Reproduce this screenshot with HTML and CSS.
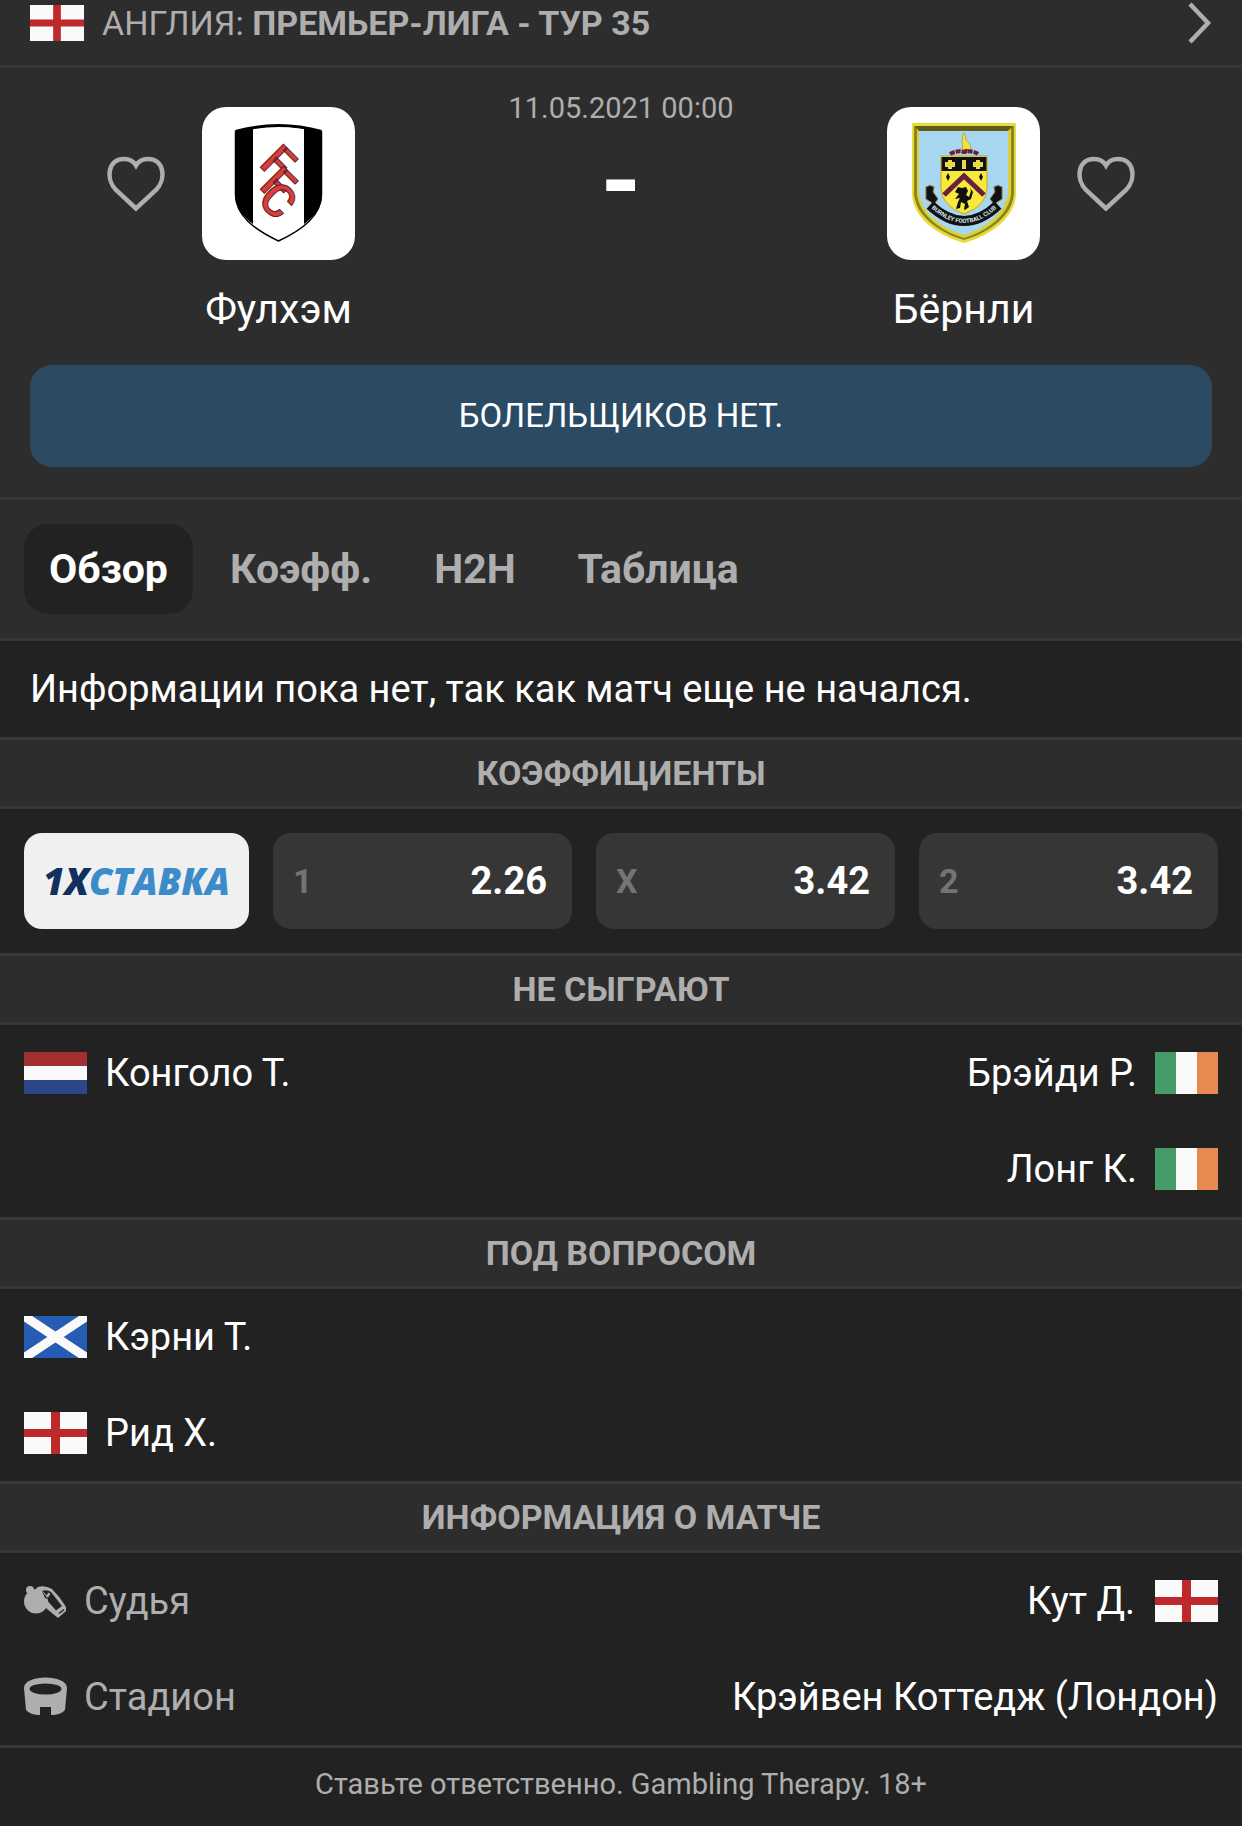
FILE: index.html
```html
<!DOCTYPE html>
<html lang="ru">
<head>
	<meta charset="UTF-8">
	<meta name="viewport" content="width=device-width, initial-scale=1">
	<title>Фулхэм - Бёрнли</title>
	<link rel="stylesheet" href="styles.css">
</head>
<body>
	<!-- флаги и сердечко -->
	<svg class="sprite" aria-hidden="true">
		<symbol id="eng" viewBox="0 0 63 42">
			<rect width="63" height="42" fill="#fafafa"/>
			<path d="M27 0h9v42h-9zM0 17h63v8H0z" fill="#be2a2c"/>
		</symbol>
		<symbol id="ned" viewBox="0 0 63 42">
			<rect width="63" height="42" fill="#fafafa"/>
			<rect width="63" height="14" fill="#a23031"/>
			<rect y="28" width="63" height="14" fill="#2b4788"/>
		</symbol>
		<symbol id="irl" viewBox="0 0 63 42">
			<rect width="63" height="42" fill="#fafafa"/>
			<rect width="21" height="42" fill="#469b69"/>
			<rect x="42" width="21" height="42" fill="#e68a50"/>
		</symbol>
		<symbol id="sco" viewBox="0 0 63 42">
			<rect width="63" height="42" fill="#265cb4"/>
			<path d="M0 0l63 42M63 0L0 42" stroke="#fafafa" stroke-width="9"/>
		</symbol>
		<symbol id="heart" viewBox="0 0 58 56">
			<path d="M29 52.500L9 34C-1 24 0 3 17 3C23 3 27 6 29 9.500C31 6 35 3 41 3C58 3 59 24 49 34Z" fill="none" stroke="#aeaeae" stroke-width="4.500"/>
		</symbol>
	</svg>

	<header>
		<a class="league" href="#">
			<svg class="flag-small"><use href="#eng"/></svg>
			<span>АНГЛИЯ: <b>ПРЕМЬЕР-ЛИГА - ТУР 35</b></span>
			<svg class="arrow" viewBox="0 0 24 42"><path d="M2 2l18 19L2 40" fill="none" stroke="#aeaeae" stroke-width="4.500"/></svg>
		</a>
	</header>

	<section class="match">
		<div class="teams">
			<div class="team">
				<button class="fav" type="button" aria-label="В избранное"><svg><use href="#heart"/></svg></button>
				<svg class="crest" viewBox="0 0 153 153">
					<path d="M33.500 25Q77 12.500 119.500 25V88C119 108 102 122 76.500 134C51 122 34 108 33.500 88Z" fill="#fff" stroke="#000" stroke-width="1.500"/>
					<path d="M33 25Q42 22 51 21V117Q33 104 33 88ZM102 21Q111 22 120 25V88Q120 104 102 117Z" fill="#000"/>
					<path d="M33.500 24.500Q77 12.500 119.500 24.500" fill="none" stroke="#000" stroke-width="3"/>
					<g class="monogram">
						<text transform="translate(56 58) rotate(45)">F</text>
						<text transform="translate(56 80) rotate(45)">F</text>
						<text transform="translate(54 94) rotate(45)">C</text>
					</g>
				</svg>
				<h2>Фулхэм</h2>
			</div>
			<div class="score">
				<time datetime="2021-05-11T00:00">11.05.2021 00:00</time>
				<span class="result">-</span>
			</div>
			<div class="team">
				<svg class="crest" viewBox="0 0 153 153">
					<path d="M25 16H129V87C128 112 102 129 77 136C52 129 26 112 25 87Z" fill="#e6dc3c"/>
					<path d="M27 19H127V87C125 110 101 126 77 133C53 126 29 110 27 87Z" fill="#8b8420"/>
					<path d="M30 20H124V87C122 108 100 124 77 131C54 124 32 108 30 87Z" fill="#d9d03c"/>
					<path d="M28 19H126L121 24H32Z" fill="#605c16"/>
					<path d="M32 24H121V86C118 107 98 121 77 128C55 121 35 107 32 86Z" fill="#a6d6f0"/>
					<!-- аист -->
					<path d="M76 26l2 1 1 6 4 4 1 5-5 1H71l5-2-1-6z" fill="#f3e23c" stroke="#8a8230" stroke-width=".5"/>
					<path d="M63 47q7-4 14-2q8-2 14 2" fill="none" stroke="#6c1f3c" stroke-width="4" stroke-dasharray="5 1"/>
					<path d="M79 42v4" stroke="#6c1f3c" stroke-width="3"/>
					<!-- внутренний щит -->
					<path d="M54 49H100V82Q99 99 77 107Q55 99 54 82Z" fill="#f7ea3c" stroke="#c9a227" stroke-width="1"/>
					<path d="M54.500 50H99.500V64H54.500Z" fill="#111"/>
					<path d="M58 55h10v5H58zM86 55h10v5H86zM75 53h4v9h-4zM61 53h4v9h-4zM89 53h4v9h-4z" fill="#e8d84a"/>
					<path d="M57 88L77 69L97 88" fill="none" stroke="#6c1f3c" stroke-width="5"/>
					<path d="M61 66l2 4-2 4-2-4zM94 66l2 4-2 4-2-4z" fill="#111"/>
					<path d="M71 80l4 1 4-1 2 4-2 4 3 2 2-6-1-3 3 4-2 7-4 2 2 6-4 3-1-1 1-5-4-2-1 6-4 1 2-7 2-4-5 1 4-5-4-2z" fill="#111"/>
					<!-- лента -->
					<path d="M39 80q4-3 8 0l-1 5 5 7-4 5-8-5zM115 80q-4-3-8 0l1 5-5 7 4 5 8-5z" fill="#111" stroke="#8b6d25" stroke-width="1"/>
					<path d="M43 98Q77 130 111 98" fill="none" stroke="#111" stroke-width="10"/>
					<path id="motto" d="M42 99Q77 133 112 99" fill="none"/>
					<text class="motto"><textPath href="#motto" startOffset="50%">BURNLEY FOOTBALL CLUB</textPath></text>
				</svg>
				<button class="fav" type="button" aria-label="В избранное"><svg><use href="#heart"/></svg></button>
				<h2>Бёрнли</h2>
			</div>
		</div>
		<p class="notice">БОЛЕЛЬЩИКОВ НЕТ.</p>
	</section>

	<nav class="tabs">
		<button class="tab active" type="button">Обзор</button>
		<button class="tab" type="button">Коэфф.</button>
		<button class="tab" type="button">H2H</button>
		<button class="tab" type="button">Таблица</button>
	</nav>

	<main>
		<p class="info">Информации пока нет, так как матч еще не начался.</p>

		<h3>КОЭФФИЦИЕНТЫ</h3>
		<div class="odds">
			<a class="bookmaker" href="#"><span>1X</span>СТАВКА</a>
			<button class="odd" type="button"><span>1</span><b>2.26</b></button>
			<button class="odd" type="button"><span>X</span><b>3.42</b></button>
			<button class="odd" type="button"><span>2</span><b>3.42</b></button>
		</div>

		<h3>НЕ СЫГРАЮТ</h3>
		<div class="players">
			<ul>
				<li><svg class="flag"><use href="#ned"/></svg>Конголо Т.</li>
			</ul>
			<ul class="away">
				<li><svg class="flag"><use href="#irl"/></svg>Брэйди Р.</li>
				<li><svg class="flag"><use href="#irl"/></svg>Лонг К.</li>
			</ul>
		</div>

		<h3>ПОД ВОПРОСОМ</h3>
		<div class="players">
			<ul>
				<li><svg class="flag"><use href="#sco"/></svg>Кэрни Т.</li>
				<li><svg class="flag"><use href="#eng"/></svg>Рид Х.</li>
			</ul>
		</div>

		<h3>ИНФОРМАЦИЯ О МАТЧЕ</h3>
		<dl class="details">
			<div>
				<dt>
					<svg viewBox="0 0 43 40">
						<path d="M14 6Q21 4 28 8Q36 16 42 26V30L34 37L23 28L9 10Z" fill="#aeaeae"/>
						<path d="M18 10Q23 8 27 11L38 25L32 29.500L21 17Z" fill="#222"/>
						<path d="M22 15l2.500-3.500 2 1.500-2.500 3.500z" fill="#aeaeae"/>
						<path d="M35 32.500l5-4" stroke="#222" stroke-width="1.500"/>
						<circle cx="12" cy="20.500" r="12" fill="#aeaeae"/>
						<circle cx="6" cy="9" r="4" fill="#aeaeae"/>
						<path d="M18 10L24 18L21 17Z" fill="#222"/>
					</svg>
					Судья
				</dt>
				<dd>Кут Д.<svg class="flag"><use href="#eng"/></svg></dd>
			</div>
			<div>
				<dt>
					<svg viewBox="0 0 43 40">
						<path d="M0 11C0-3 43-3 43 11L41 33Q37 38 27 38V30H16V38Q6 38 2 33Z" fill="#aeaeae"/>
						<ellipse cx="21.500" cy="12" rx="16" ry="5.500" fill="#222"/>
					</svg>
					Стадион
				</dt>
				<dd>Крэйвен Коттедж (Лондон)</dd>
			</div>
		</dl>
	</main>

	<footer>Ставьте ответственно. Gambling Therapy. 18+</footer>
</body>
</html>
```
FILE: styles.css
```css
*{margin:0;padding:0;box-sizing:border-box;}
body{background:#222;color:#fff;font-family:Roboto,"Liberation Sans",sans-serif;font-size:38px;line-height:48px;}
ul{list-style:none;}
a{color:inherit;text-decoration:none;}
button{border:0;background:none;color:inherit;font:inherit;cursor:pointer;}
svg{display:block;flex:none;}
.sprite{position:absolute;width:0;height:0;}

.league{display:flex;align-items:center;gap:18px;padding:0 30px 19px;background:#2d2d2d;border-bottom:3px solid #373737;color:#aeaeae;font-size:34px;line-height:46px;}
.flag-small{width:54px;height:36px;}
.arrow{width:24px;height:42px;margin-left:auto;}

.match{padding:22px 30px 30px;background:#2d2d2d;border-bottom:3px solid #373737;}
.teams{display:flex;justify-content:space-between;padding:0 77px;}
.team{display:grid;grid-template-columns:58px 153px 58px;column-gap:37px;row-gap:24px;align-items:center;margin-top:17px;}
.crest{grid-column:2;width:153px;height:153px;border-radius:24px;background:#fff;}
.fav svg{width:58px;height:56px;}
.team h2{grid-column:1 / 4;font-size:41px;font-weight:400;line-height:50px;text-align:center;}
.monogram{font:500 46px Roboto,sans-serif;fill:#dc3c3c;stroke:#5c1f1f;stroke-width:1px;}
.motto{font:bold 6px Roboto,sans-serif;fill:#cfe6f0;text-anchor:middle;}
.score{display:flex;flex-direction:column;align-items:center;}
.score time{color:#aeaeae;font-size:29px;line-height:36px;}
.result{margin-top:16px;font-size:104px;font-weight:700;line-height:80px;}
.notice{margin-top:31px;border-radius:22px;background:#2a4b63;font-size:33px;line-height:102px;text-align:center;}

.tabs{display:flex;gap:12px;padding:24px;background:#2d2d2d;border-bottom:3px solid #373737;}
.tab{padding:0 25px;border-radius:24px;color:#aeaeae;font-size:41px;font-weight:700;line-height:90px;}
.tab.active{background:#222;color:#fff;}

.info{padding:0 30px;line-height:96px;}
h3{background:#2d2d2d;border-top:3px solid #373737;border-bottom:3px solid #373737;color:#aeaeae;font-size:34px;line-height:66px;text-align:center;}

.odds{display:grid;grid-template-columns:225px repeat(3,1fr);gap:24px;padding:24px;line-height:96px;}
.bookmaker{border-radius:18px;background:#f0f0f0;color:#3c8ccb;font-family:"Open Sans",sans-serif;font-size:37px;font-weight:800;font-style:italic;text-align:center;}
.bookmaker span{color:#12305f;}
.odd{display:flex;justify-content:space-between;padding:0 25px 0 20px;border-radius:18px;background:#363636;}
.odd span{color:#747474;font-size:34px;font-weight:700;}

.players{display:flex;justify-content:space-between;padding:0 24px;}
.players li{display:flex;align-items:center;gap:18px;height:96px;}
.away li{flex-direction:row-reverse;}
.flag{width:63px;height:42px;}

.details{padding:0 24px;}
.details div,.details dt,.details dd{display:flex;align-items:center;}
.details div{justify-content:space-between;height:96px;}
.details dt{gap:17px;color:#aeaeae;}
.details dt svg{width:43px;height:40px;}
.details dd{gap:20px;}

footer{border-top:3px solid #373737;color:#aeaeae;font-size:29px;line-height:72px;text-align:center;}
```
